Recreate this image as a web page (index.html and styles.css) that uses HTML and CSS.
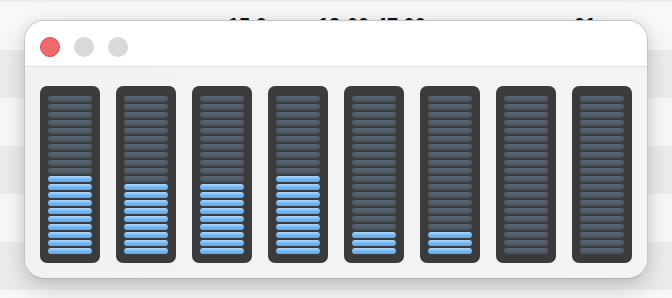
FILE: index.html
```html
<!DOCTYPE html>
<html lang="en">
<head>
    <meta charset="UTF-8">
    <meta name="viewport" content="width=device-width, initial-scale=1.0">
    <title>Level Meters</title>
    <link rel="stylesheet" href="styles.css">
</head>
<body>
    <div class="table">
        <div class="row"><span class="cell c1">15.0</span><span class="cell c2">12:00:47.00</span><span class="cell c3">01</span></div>
        <div class="row alt"></div>
        <div class="row"></div>
        <div class="row alt"></div>
        <div class="row"></div>
        <div class="row alt"></div>
        <div class="row last"></div>
    </div>

    <div class="window">
        <div class="titlebar">
            <span class="light close"></span>
            <span class="light"></span>
            <span class="light"></span>
        </div>
        <div class="meters" id="meters"></div>
    </div>

    <script>
        const levels = [10, 9, 9, 10, 3, 3, 0, 0];
        const segments = 20;
        const meters = document.getElementById('meters');

        levels.forEach(level => {
            const meter = document.createElement('div');
            meter.classList.add('meter');
            for (let i = 0; i < segments; i++) {
                const seg = document.createElement('div');
                seg.classList.add('seg');
                if (i >= segments - level) seg.classList.add('on');
                meter.appendChild(seg);
            }
            meters.appendChild(meter);
        });
    </script>
</body>
</html>
```

FILE: styles.css
```css
html, body {
    margin: 0;
    height: 298px;
    overflow: hidden;
}
body {
    font-family: "Liberation Sans", Arial, sans-serif;
    background: #f8f8f8;
    position: relative;
}
.table {
    border-top: 2px solid #ececec;
}
.row {
    height: 48px;
    background: #f8f8f8;
    position: relative;
}
.row.alt {
    background: #ececec;
}
.row.last {
    height: 8px;
}
.cell {
    position: absolute;
    top: 13px;
    font-size: 20px;
    line-height: 20px;
    font-weight: bold;
    color: #111;
}
.c1 { left: 228px; }
.c2 { left: 318px; }
.c3 { left: 574px; }

.window {
    position: absolute;
    left: 24px;
    top: 20px;
    width: 624px;
    height: 259px;
    box-sizing: border-box;
    border: 1px solid #c4c4c4;
    border-bottom-color: #b4b4b4;
    border-radius: 20px;
    background: linear-gradient(90deg, #f1f2f2, #f3f4f4);
    overflow: hidden;
    box-shadow: 0 10px 26px rgba(0, 0, 0, 0.17), 0 0 10px rgba(0, 0, 0, 0.07);
}
.titlebar {
    height: 45px;
    background: #fff;
    border-bottom: 1px solid #e2e2e2;
    display: flex;
    align-items: center;
    gap: 14px;
    padding: 0 15px;
}
.light {
    width: 20px;
    height: 20px;
    border-radius: 50%;
    background: #d9d9d9;
    box-sizing: border-box;
    margin-top: 6px;
}
.light.close {
    background: #ef6a6e;
    border: 1px solid #e0474c;
}
.meters {
    display: flex;
    gap: 16px;
    padding: 19px 15px 0;
}
.meter {
    width: 60px;
    height: 177px;
    box-sizing: border-box;
    background: #3b3b3b;
    border-radius: 7px;
    padding: 10px 8px 9px;
    display: flex;
    flex-direction: column;
    gap: 2px;
}
.seg {
    height: 6px;
    border-radius: 3px;
    background: linear-gradient(#5a6876, #47535e);
}
.seg.on {
    background: linear-gradient(#b2dafb, #78b9f2 45%, #5ea6ea);
}
```
